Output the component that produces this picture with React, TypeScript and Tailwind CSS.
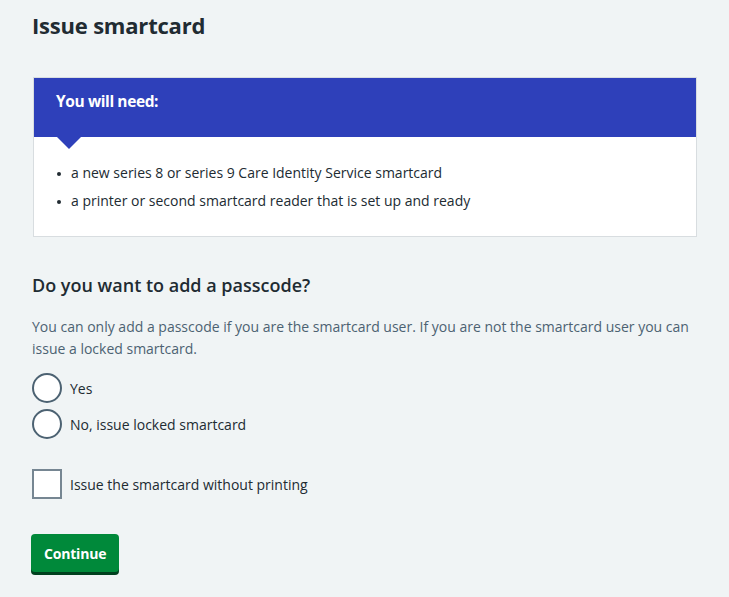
export default function App() {
  return (
    <div
      className="min-h-[597px] w-full bg-[#f0f4f5] text-[#212b32] px-8 pt-[10px] pb-4"
      style={{ fontFamily: '"Open Sans", "Noto Sans", Arial, sans-serif' }}
    >
      <h1 className="text-[22px] font-bold leading-[30px] tracking-[-0.2px] mb-[37px]">Issue smartcard</h1>

      <div className="ml-[1px] bg-white border border-[#d8dde0]">
        <div className="relative bg-[#2e40ba] h-[59px] px-[22px] pt-[11px]">
          <h2 className="text-[15.5px] font-bold text-white leading-[24px] tracking-[-0.4px]">You will need:</h2>
          <span className="absolute left-[23px] -bottom-[12px] w-0 h-0 border-l-[12px] border-r-[12px] border-t-[12px] border-l-transparent border-r-transparent border-t-[#2e40ba]" />
        </div>
        <ul className="px-[23px] pt-[26px] pb-[25px] text-[14px] leading-[20px]">
          <li className="flex items-start gap-[10px] mb-[8px]">
            <span className="mt-[9px] w-[4px] h-[4px] rounded-full bg-[#212b32] shrink-0" />
            a new series 8 or series 9 Care Identity Service smartcard
          </li>
          <li className="flex items-start gap-[10px]">
            <span className="mt-[9px] w-[4px] h-[4px] rounded-full bg-[#212b32] shrink-0" />
            a printer or second smartcard reader that is set up and ready
          </li>
        </ul>
      </div>

      <h2 className="mt-[35px] text-[18px] font-semibold leading-[26px]">Do you want to add a passcode?</h2>
      <p className="mt-[18px] text-[14px] leading-[22px] text-[#4c6272]">
        You can only add a passcode if you are the smartcard user. If you are not the smartcard user you can issue a locked smartcard.
      </p>

      <div className="mt-[13px] flex flex-col gap-[6px]">
        {['Yes', 'No, issue locked smartcard'].map(label => (
          <label key={label} className="flex items-center gap-[8px] text-[14px]">
            <span className="w-[30px] h-[30px] rounded-full border-2 border-[#4c6272] bg-white shrink-0" />
            {label}
          </label>
        ))}
      </div>

      <label className="mt-[30px] flex items-center gap-[8px] text-[14px]">
        <span className="w-[30px] h-[30px] border-2 border-[#768692] bg-white shrink-0" />
        Issue the smartcard without printing
      </label>

      <button className="mt-[35px] -ml-[1px] h-[38px] px-[13px] rounded-[4px] bg-[#00893a] text-white text-[14px] font-bold tracking-[-0.2px] shadow-[0_3px_0_#00401e]">
        Continue
      </button>
    </div>
  )
}
